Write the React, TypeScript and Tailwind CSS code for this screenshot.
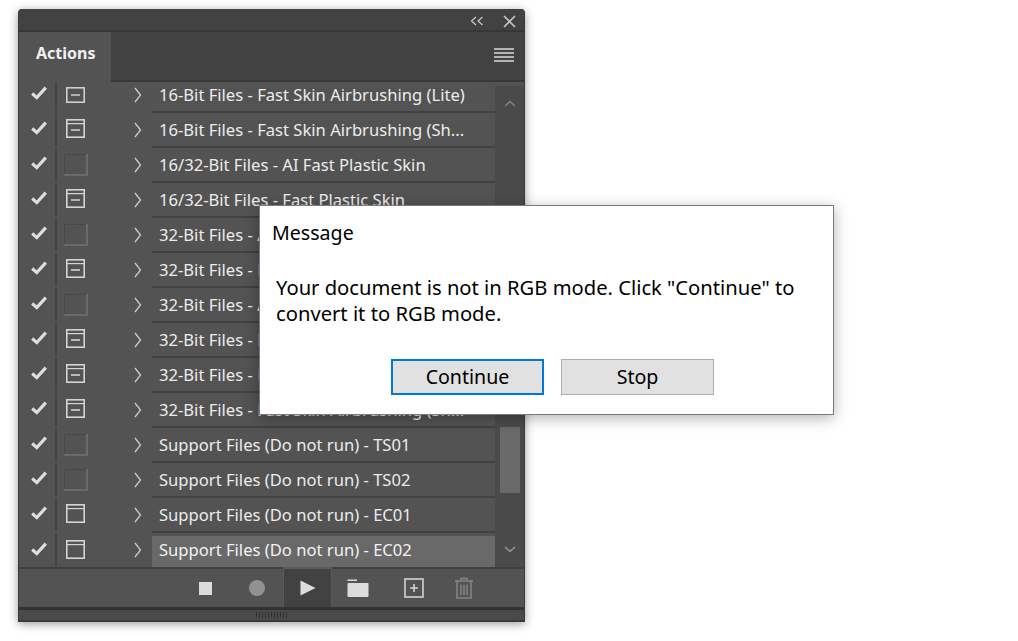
import React from "react";

type IconKind = "dash" | "dashbar" | "empty" | "window";

const rows: { icon: IconKind; label: string; selected?: boolean }[] = [
  { icon: "dash", label: "16-Bit Files - Fast Skin Airbrushing (Lite)" },
  { icon: "dashbar", label: "16-Bit Files - Fast Skin Airbrushing (Sh..." },
  { icon: "empty", label: "16/32-Bit Files - AI Fast Plastic Skin" },
  { icon: "dashbar", label: "16/32-Bit Files - Fast Plastic Skin" },
  { icon: "empty", label: "32-Bit Files - AI Fast Plastic Skin" },
  { icon: "dashbar", label: "32-Bit Files - Fast Plastic Skin" },
  { icon: "empty", label: "32-Bit Files - AI Fast Skin Airbrushing" },
  { icon: "dashbar", label: "32-Bit Files - Fast Skin Airbrushing" },
  { icon: "dashbar", label: "32-Bit Files - Fast Skin Airbrushing (Lite)" },
  { icon: "dashbar", label: "32-Bit Files - Fast Skin Airbrushing (Sh..." },
  { icon: "empty", label: "Support Files (Do not run) - TS01" },
  { icon: "empty", label: "Support Files (Do not run) - TS02" },
  { icon: "window", label: "Support Files (Do not run) - EC01" },
  { icon: "window", label: "Support Files (Do not run) - EC02", selected: true },
];

function Check() {
  return (
    <svg width="16" height="14" viewBox="0 0 16 14" className="block -mt-[3px]">
      <path d="M1.2 7.5 L5.8 11.6 L14.8 1.6" fill="none" stroke="#dedede" strokeWidth="3.2" />
    </svg>
  );
}

function SetIcon({ kind }: { kind: IconKind }) {
  if (kind === "empty") {
    return (
      <svg width="24" height="22" viewBox="0 0 24 22" className="block">
        <path d="M0.5 21 V0.5 H22" fill="none" stroke="#484848" strokeWidth="1" />
        <path d="M23 0 V21 H0" fill="none" stroke="#6a6a6a" strokeWidth="2" />
      </svg>
    );
  }
  if (kind === "dash") {
    return (
      <svg width="19" height="16" viewBox="0 0 19 16" className="block mt-[1px]">
        <rect x="0.8" y="0.8" width="17.4" height="14.4" fill="none" stroke="#cfcfcf" strokeWidth="1.6" />
        <path d="M5 8 H14" stroke="#cfcfcf" strokeWidth="1.6" />
      </svg>
    );
  }
  return (
    <svg width="19" height="19" viewBox="0 0 19 19" className="block -mt-[2px]">
      <rect x="0.8" y="0.8" width="17.4" height="17.4" fill="none" stroke="#d4d4d4" strokeWidth="1.6" />
      <path d="M1 4.6 H18" stroke="#d4d4d4" strokeWidth="1.2" />
      {kind === "dashbar" && <path d="M5 11 H14" stroke="#d4d4d4" strokeWidth="1.6" />}
    </svg>
  );
}

function Row({ icon, label, selected }: { icon: IconKind; label: string; selected?: boolean }) {
  return (
    <div className={`flex shrink-0 ${selected ? "h-[34px]" : "h-[33px] mb-[2px]"}`}>
      <div className="w-[36px] flex items-center justify-center pl-[3px] shrink-0">
        <Check />
      </div>
      <div className={`w-[2px] bg-[#434343] shrink-0 ${selected ? "mb-[1px]" : ""}`} />
      <div className="w-[38px] flex items-center justify-center shrink-0 pr-[1px]">
        <SetIcon kind={icon} />
      </div>
      <div className="w-[57px] flex items-center justify-end pr-[10px] shrink-0">
        <svg width="8" height="16" viewBox="0 0 8 16" className="block">
          <path d="M1 1 L6.5 8 L1 15" fill="none" stroke="#cccccc" strokeWidth="1.3" />
        </svg>
      </div>
      {selected ? (
        <div className="w-[343px] shrink-0 self-end h-[31px] flex items-center pl-[7px] pb-[3px] text-[16.6px] leading-none whitespace-nowrap overflow-hidden bg-[#696969] text-[#f2f2f2]">
          {label}
        </div>
      ) : (
        <div className="w-[343px] shrink-0 flex items-center pl-[7px] pt-[2px] text-[16.6px] leading-none whitespace-nowrap overflow-hidden bg-[#535353] text-[#ececec]">
          {label}
        </div>
      )}
    </div>
  );
}

function RowSeparators() {
  return (
    <div className="absolute left-[133px] top-[29px] w-[343px] flex flex-col gap-[33px] pointer-events-none">
      {Array.from({ length: 13 }, (_, i) => (
        <div key={i} className="h-[2px] bg-[#414141]" />
      ))}
    </div>
  );
}

function Dialog() {
  return (
    <div className="absolute left-[259px] top-[205px] w-[575px] h-[210px] bg-white border border-[#7a7a7a] shadow-[0_3px_14px_rgba(0,0,0,0.3)] text-black">
      <div className="pl-[12px] pt-[13px] text-[19.6px] leading-[28px]">Message</div>
      <div className="pl-[16px] pt-[27px] text-[20.2px] leading-[26px] w-[560px]">
        Your document is not in RGB mode. Click "Continue" to convert it to RGB mode.
      </div>
      <div className="flex justify-end gap-[17px] pr-[119px] pt-[33px]">
        <button className="w-[153px] h-[36px] bg-[#e1e1e1] border-2 border-[#0078d7] text-[19.6px]">Continue</button>
        <button className="w-[153px] h-[36px] bg-[#e1e1e1] border border-[#adadad] text-[19.6px]">Stop</button>
      </div>
    </div>
  );
}

function Panel() {
  return (
    <div className="ml-[18px] pt-[9px]">
      <div className="w-[507px] h-[613px] flex flex-col bg-[#535353] border-x-[1px] border-b-[2px] border-[#3a3a3a] rounded-t-[4px] shadow-[0_2px_10px_rgba(0,0,0,0.4)] overflow-hidden">
        <div className="h-[23px] shrink-0 bg-[#424242] border-b-[2px] border-[#363636] flex items-center justify-end pt-[4px]">
          <svg width="14" height="10" viewBox="0 0 14 10" className="block mr-[19px] -mt-[1px]">
            <path d="M6 1 L1.5 5 L6 9 M12.5 1 L8 5 L12.5 9" fill="none" stroke="#d0d0d0" strokeWidth="1.1" />
          </svg>
          <svg width="13" height="13" viewBox="0 0 13 13" className="block mr-[8px]">
            <path d="M1 1 L12 12 M12 1 L1 12" fill="none" stroke="#c4c4c4" strokeWidth="1.6" />
          </svg>
        </div>
        <div className="h-[50px] shrink-0 flex bg-[#424242] border-b-[2px] border-[#383838]">
          <div className="w-[92px] h-[50px] shrink-0 bg-[#535353] flex pl-[17px] pt-[10px] text-[16px] leading-[22px] font-bold text-[#f0f0f0]">
            Actions
          </div>
          <div className="flex-1 flex items-center justify-end pr-[10px]">
            <div className="w-[20px] flex flex-col gap-[2px] mt-[-2px]">
              <div className="h-[2px] bg-[#b4b4b4]" />
              <div className="h-[2px] bg-[#b4b4b4]" />
              <div className="h-[2px] bg-[#b4b4b4]" />
              <div className="h-[2px] bg-[#b4b4b4]" />
            </div>
          </div>
        </div>
        <div className="flex h-[485px] shrink-0">
          <div className="relative w-[476px] h-[485px] shrink-0 overflow-hidden">
            <div className="flex flex-col -mt-[4px]">
              {rows.map((r, i) => (
                <Row key={i} {...r} />
              ))}
            </div>
            <RowSeparators />
          </div>
          <div className="flex-1 bg-[#4a4a4a] relative mt-[4px] flex justify-center">
            <svg width="12" height="7" viewBox="0 0 12 7" className="absolute top-[14px]">
              <path d="M1 6 L6 1.5 L11 6" fill="none" stroke="#808080" strokeWidth="1.6" />
            </svg>
            <div className="absolute top-[341px] w-[20px] h-[66px] bg-[#6a6a6a]" />
            <svg width="12" height="7" viewBox="0 0 12 7" className="absolute bottom-[14px]">
              <path d="M1 1 L6 5.5 L11 1" fill="none" stroke="#959595" strokeWidth="1.6" />
            </svg>
          </div>
        </div>
        <div className="h-[40px] shrink-0 border-t-[2px] border-[#3f3f3f] flex items-stretch pl-[162px] bg-[#535353]">
          <div className="w-[50px] flex items-center justify-center pr-[2px]">
            <div className="w-[13px] h-[13px] bg-[#dcdcdc]" />
          </div>
          <div className="w-[52px] flex items-center justify-center">
            <div className="w-[16px] h-[16px] rounded-full bg-[#919191]" />
          </div>
          <div className="w-[49px] -mt-[2px] bg-[#424242] flex items-center justify-center border-x-[1px] border-t-[2px] border-[#5a5a5a]">
            <svg width="16" height="16" viewBox="0 0 16 16" className="block">
              <path d="M0.5 0.5 L15.5 8 L0.5 15.5 Z" fill="#dcdcdc" />
            </svg>
          </div>
          <div className="w-[50px] flex items-center justify-center pl-[2px]">
            <svg width="22" height="18" viewBox="0 0 22 18" className="block">
              <path d="M0.5 0.5 H10 V2 H0.5 Z" fill="#dcdcdc" />
              <path d="M1.5 4 H21 Q21.5 4 21.5 5 V17 Q21.5 18 20.5 18 H1.5 Q0.5 18 0.5 17 V5 Q0.5 4 1.5 4 Z" fill="#dcdcdc" />
            </svg>
          </div>
          <div className="w-[52px] flex items-center justify-center pl-[11px]">
            <svg width="20" height="20" viewBox="0 0 20 20" className="block">
              <rect x="1" y="1" width="18" height="18" fill="none" stroke="#d2d2d2" strokeWidth="1.6" />
              <path d="M10 6 V14 M6 10 H14" stroke="#d2d2d2" strokeWidth="1.6" />
            </svg>
          </div>
          <div className="w-[50px] flex items-center justify-center pl-[10px]">
            <svg width="20" height="22" viewBox="0 0 20 22" className="block">
              <path d="M1 4 H19 M7 4 V1.5 H13 V4 M3 4 V21 H17 V4 M7 7.5 V18 M10 7.5 V18 M13 7.5 V18" fill="none" stroke="#858585" strokeWidth="1.5" />
            </svg>
          </div>
        </div>
        <div className="h-[3px] shrink-0 bg-[#333333]" />
        <div className="flex-1 bg-[#4a4a4a] flex items-center justify-center gap-[2px]">
          {Array.from({ length: 11 }, (_, i) => (
            <div key={i} className="w-[1px] h-[6px] bg-[#333333]" />
          ))}
        </div>
      </div>
    </div>
  );
}

export default function App() {
  return (
    <div className="relative w-[1018px] h-[641px] bg-white overflow-hidden font-['Noto_Sans',sans-serif]">
      <Panel />
      <Dialog />
    </div>
  );
}
